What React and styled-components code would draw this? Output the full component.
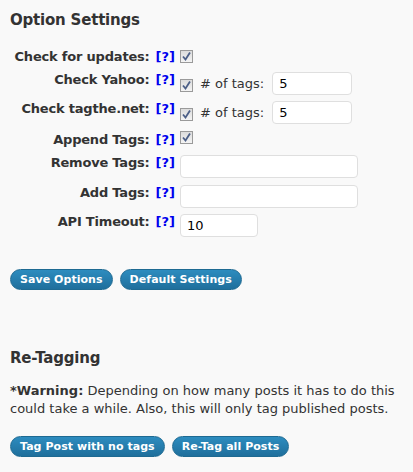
import React from "react";
import styled, {createGlobalStyle} from "styled-components";

const GlobalStyle = createGlobalStyle`
  html, body {
    margin: 0;
    padding: 0;
    background: #f9f9f9;
  }
  body {
    font-family: "DejaVu Sans", Verdana, sans-serif;
    font-size: 13px;
    color: #333;
  }
`;

const settings = [
    {label: 'Check for updates:', kind: 'check', height: 23, boxTop: 1},
    {label: 'Check Yahoo:', kind: 'count', value: '5', height: 29},
    {label: 'Check tagthe.net:', kind: 'count', value: '5', height: 31},
    {label: 'Append Tags:', kind: 'check', height: 23, boxTop: -1},
    {label: 'Remove Tags:', kind: 'text', value: '', width: 178, height: 30},
    {label: 'Add Tags:', kind: 'text', value: '', width: 178, height: 29},
    {label: 'API Timeout:', kind: 'text', value: '10', width: 78, height: 30},
]

const Page = styled.div`
  padding: 0 10px;
`;

const Heading = styled.h3`
  margin: 0;
  padding-top: ${props => props.top}px;
  font-size: 15px;
  font-weight: bold;
  line-height: 20px;
  letter-spacing: -0.2px;
  color: #333;
`;

const Form = styled.div`
  margin-top: ${props => props.top}px;
`;

const Row = styled.div`
  display: grid;
  grid-template-columns: 165px 1fr;
  column-gap: 5px;
  align-items: start;
  height: ${props => props.height}px;
`;

const Label = styled.div`
  text-align: right;
  font-weight: bold;
  line-height: 16px;
  white-space: nowrap;
`;

const LabelText = styled.span`
  letter-spacing: -0.2px;
`;

const Help = styled.a`
  color: #0000ee;
  text-decoration: none;
  margin-left: 6px;
`;

const Field = styled.div`
  display: flex;
  align-items: center;
  margin-top: ${props => props.top || 0}px;
`;

const Box = styled.span`
  display: inline-flex;
  align-items: center;
  justify-content: center;
  box-sizing: border-box;
  width: 13px;
  height: 13px;
  border: 1px solid #9a9a9a;
  background: linear-gradient(#dcdcdc, #f4f4f4);
  margin-top: ${props => props.offset || 0}px;
`;

const Small = styled.span`
  margin: 0 8px 0 7px;
  white-space: nowrap;
`;

const Input = styled.input`
  box-sizing: border-box;
  width: ${props => props.width}px;
  height: 23px;
  border: 1px solid #dfdfdf;
  border-radius: 4px;
  background: #fff;
  padding: 0 6px;
  font-family: "DejaVu Sans", Verdana, sans-serif;
  font-size: 13px;
  color: #000;
  outline: none;
`;

const Buttons = styled.div`
  display: flex;
  gap: 7px;
  margin-top: ${props => props.top}px;
`;

const Button = styled.button`
  height: 21px;
  padding: 0 9px;
  border: 1px solid #1e6a92;
  border-radius: 11px;
  background: linear-gradient(#2d8cbf, #1f6f9c);
  color: #fff;
  font-family: "DejaVu Sans", Verdana, sans-serif;
  font-size: 11px;
  font-weight: bold;
  letter-spacing: 0.05px;
  cursor: pointer;
`;

const Warning = styled.p`
  margin: 14px 0 0;
  line-height: 18px;
  font-size: 13px;
`;

const Check = ({offset}) => (
    <Box offset={offset}>
        <svg width="9" height="9" viewBox="0 0 9 9">
            <path d="M1 4.5 L3.5 7.5 L8 0.5" fill="none" stroke="#4c5f87" strokeWidth="1.8"/>
        </svg>
    </Box>
);

const SettingRow = ({item}) => (
    <Row height={item.height}>
        <Label>
            <LabelText>{item.label}</LabelText>
            <Help href="#">[?]</Help>
        </Label>
        {item.kind === 'check' && (
            <Field top={item.boxTop}><Check/></Field>
        )}
        {item.kind === 'count' && (
            <Field>
                <Check offset={4}/>
                <Small># of tags:</Small>
                <Input width={80} defaultValue={item.value}/>
            </Field>
        )}
        {item.kind === 'text' && (
            <Field>
                <Input width={item.width} defaultValue={item.value}/>
            </Field>
        )}
    </Row>
);

export default function App() {
    return (
        <>
            <GlobalStyle/>
            <Page>
                <Heading top={10}>Option Settings</Heading>
                <Form top={19}>
                    {settings.map(item => <SettingRow key={item.label} item={item}/>)}
                </Form>
                <Buttons top={25}>
                    <Button>Save Options</Button>
                    <Button>Default Settings</Button>
                </Buttons>
                <Heading top={58}>Re-Tagging</Heading>
                <Warning>
                    <b>*Warning:</b> Depending on how many posts it has to do this could take a while. Also, this will only tag published posts.
                </Warning>
                <Buttons top={18}>
                    <Button>Tag Post with no tags</Button>
                    <Button>Re-Tag all Posts</Button>
                </Buttons>
            </Page>
        </>
    );
}
